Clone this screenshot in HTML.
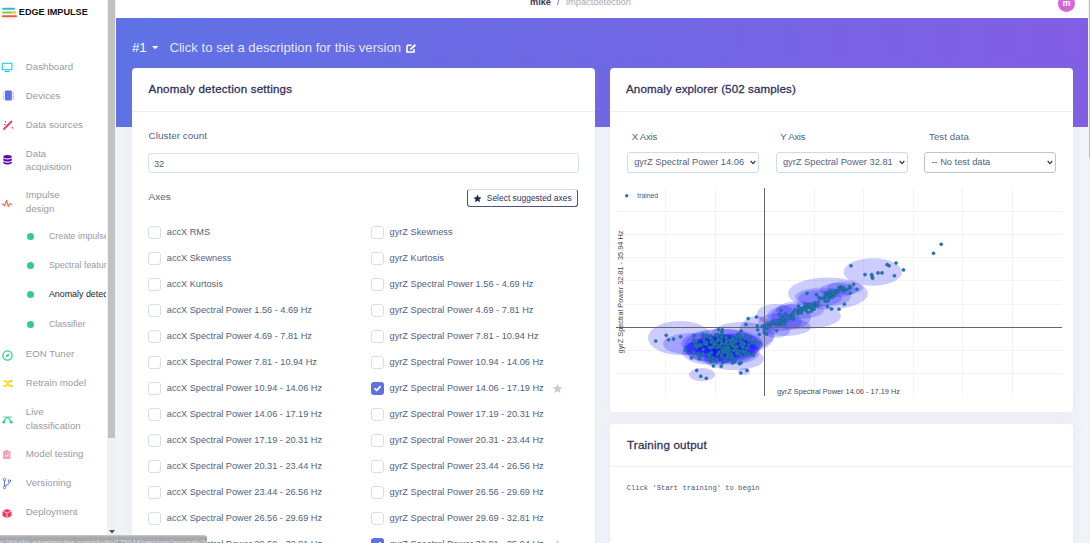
<!DOCTYPE html><html><head><meta charset="utf-8"><style>
html,body{margin:0;padding:0;width:1090px;height:543px;overflow:hidden;background:#fff;}
body{position:relative;font-family:"Liberation Sans",sans-serif;}
.t{position:absolute;white-space:nowrap;line-height:1;}
svg{position:absolute;overflow:visible}
</style></head><body>
<div style="position:absolute;left:116px;top:0px;width:972px;height:18px;background:#fff"></div>
<div style="position:absolute;left:116px;top:18px;width:972px;height:109px;background:linear-gradient(87deg,#5e72e4 0,#825ee4 100%)"></div>
<div style="position:absolute;left:116px;top:127px;width:972px;height:416px;background:#f1f3f9"></div>
<div style="position:absolute;left:1088px;top:0px;width:2px;height:543px;background:#f1f1f1"></div>
<div style="position:absolute;left:1089px;top:0px;width:1px;height:158px;background:#c1c1c1"></div>
<div class="t" style="left:530px;top:-1.79px;font-size:9.2px;color:#3a3a5c;font-weight:700;font-family:'Liberation Sans', sans-serif;letter-spacing:0px;">mike</div>
<div class="t" style="left:557px;top:-1.79px;font-size:9.2px;color:#525f7f;font-weight:400;font-family:'Liberation Sans', sans-serif;letter-spacing:0px;">/</div>
<div class="t" style="left:566px;top:-1.86px;font-size:9.28px;color:#a9aab8;font-weight:400;font-family:'Liberation Sans', sans-serif;letter-spacing:0px;">impactdetection</div>
<div style="position:absolute;left:1058px;top:-5px;width:17px;height:17px;background:#d466db;border-radius:50%"></div>
<div class="t" style="left:1062.5px;top:-0.62px;font-size:9px;color:#fff;font-weight:700;font-family:'Liberation Sans', sans-serif;letter-spacing:0px;">m</div>
<div class="t" style="left:132px;top:40.83px;font-size:13.2px;color:#fff;font-weight:400;font-family:'Liberation Sans', sans-serif;letter-spacing:0px;">#1</div>
<svg style="left:151.5px;top:45.8px" width="7" height="4"><path d="M0 0 H6.4 L3.2 3.2 Z" fill="#fff"/></svg>
<div class="t" style="left:169.4px;top:40.65px;font-size:13.17px;color:rgba(255,255,255,.85);font-weight:400;font-family:'Liberation Sans', sans-serif;letter-spacing:0px;">Click to set a description for this version</div>
<svg style="left:406px;top:43px" width="12" height="10" viewBox="0 0 12 10"><path d="M1 2.2 H5.5 M1 2.2 V9 H8 V6" stroke="#fff" stroke-width="1.6" fill="none"/><path d="M4 7 L4.4 5.2 L8.6 1 L10 2.4 L5.8 6.6 Z" fill="#fff"/></svg>
<div style="position:absolute;left:132px;top:68px;width:463px;height:520px;background:#fff;border-radius:4px;box-shadow:0 0 12px rgba(136,152,170,.10)"></div>
<div style="position:absolute;left:132px;top:111px;width:463px;height:1px;background:#eceef1"></div>
<div style="position:absolute;left:610px;top:68px;width:462.5px;height:343.6px;background:#fff;border-radius:4px;box-shadow:0 0 12px rgba(136,152,170,.10)"></div>
<div style="position:absolute;left:610px;top:111px;width:462.5px;height:1px;background:#eceef1"></div>
<div style="position:absolute;left:610px;top:424px;width:462.5px;height:200px;background:#fff;border-radius:4px;box-shadow:0 0 12px rgba(136,152,170,.10)"></div>
<div style="position:absolute;left:610px;top:466px;width:462.5px;height:1px;background:#eceef1"></div>
<div class="t" style="left:148.5px;top:82.78px;font-size:11.6px;color:#32325d;font-weight:400;font-family:'Liberation Sans', sans-serif;letter-spacing:0.2px;-webkit-text-stroke:0.3px #32325d">Anomaly detection settings</div>
<div class="t" style="left:626px;top:82.78px;font-size:11.6px;color:#32325d;font-weight:400;font-family:'Liberation Sans', sans-serif;letter-spacing:0.1px;-webkit-text-stroke:0.3px #32325d">Anomaly explorer (502 samples)</div>
<div class="t" style="left:627px;top:439.38px;font-size:11.6px;color:#32325d;font-weight:400;font-family:'Liberation Sans', sans-serif;letter-spacing:0.2px;-webkit-text-stroke:0.3px #32325d">Training output</div>
<div class="t" style="left:626.7px;top:484.72px;font-size:7.15px;color:#4a5578;font-weight:400;font-family:'Liberation Mono', monospace;letter-spacing:0px;">Click 'Start training' to begin</div>
<div class="t" style="left:148.6px;top:130.99px;font-size:9.93px;color:#525f7f;font-weight:400;font-family:'Liberation Sans', sans-serif;letter-spacing:0px;">Cluster count</div>
<div style="position:absolute;left:148px;top:153px;width:430.5px;height:19.5px;box-sizing:border-box;border:1px solid #d3e3f3;border-radius:3px;background:#fff"></div>
<div class="t" style="left:154px;top:160.21px;font-size:9.2px;color:#525f7f;font-weight:400;font-family:'Liberation Sans', sans-serif;letter-spacing:0px;">32</div>
<div class="t" style="left:148.6px;top:191.99px;font-size:9.93px;color:#525f7f;font-weight:400;font-family:'Liberation Sans', sans-serif;letter-spacing:0px;">Axes</div>
<div style="position:absolute;left:467px;top:188.5px;width:111px;height:18px;box-sizing:border-box;border:1px solid #4a5676;border-top-color:#d5d9e2;border-radius:3px;background:#fff"></div>
<svg style="left:473px;top:193.5px" width="9" height="9" viewBox="0 0 24 24"><path d="M12 1.5l3.1 7.2 7.8.6-5.9 5.1 1.8 7.6L12 18l-6.8 4 1.8-7.6L1.1 9.3l7.8-.6z" fill="#172b4d"/></svg>
<div class="t" style="left:486.8px;top:193.75px;font-size:8.45px;color:#32325d;font-weight:400;font-family:'Liberation Sans', sans-serif;letter-spacing:0px;">Select suggested axes</div>
<div style="position:absolute;left:148.2px;top:226.2px;width:13px;height:12.5px;box-sizing:border-box;border:1px solid #d9dde5;border-radius:3px;background:#fff"></div>
<div class="t" style="left:166.8px;top:227.75px;font-size:9.16px;color:#525f7f;font-weight:400;font-family:'Liberation Sans', sans-serif;letter-spacing:0px;">accX RMS</div>
<div style="position:absolute;left:371.2px;top:226.2px;width:13px;height:12.5px;box-sizing:border-box;border:1px solid #d9dde5;border-radius:3px;background:#fff"></div>
<div class="t" style="left:389.5px;top:227.70px;font-size:9.22px;color:#525f7f;font-weight:400;font-family:'Liberation Sans', sans-serif;letter-spacing:0px;">gyrZ Skewness</div>
<div style="position:absolute;left:148.2px;top:252.2px;width:13px;height:12.5px;box-sizing:border-box;border:1px solid #d9dde5;border-radius:3px;background:#fff"></div>
<div class="t" style="left:166.8px;top:253.75px;font-size:9.16px;color:#525f7f;font-weight:400;font-family:'Liberation Sans', sans-serif;letter-spacing:0px;">accX Skewness</div>
<div style="position:absolute;left:371.2px;top:252.2px;width:13px;height:12.5px;box-sizing:border-box;border:1px solid #d9dde5;border-radius:3px;background:#fff"></div>
<div class="t" style="left:389.5px;top:253.70px;font-size:9.22px;color:#525f7f;font-weight:400;font-family:'Liberation Sans', sans-serif;letter-spacing:0px;">gyrZ Kurtosis</div>
<div style="position:absolute;left:148.2px;top:278.2px;width:13px;height:12.5px;box-sizing:border-box;border:1px solid #d9dde5;border-radius:3px;background:#fff"></div>
<div class="t" style="left:166.8px;top:279.75px;font-size:9.16px;color:#525f7f;font-weight:400;font-family:'Liberation Sans', sans-serif;letter-spacing:0px;">accX Kurtosis</div>
<div style="position:absolute;left:371.2px;top:278.2px;width:13px;height:12.5px;box-sizing:border-box;border:1px solid #d9dde5;border-radius:3px;background:#fff"></div>
<div class="t" style="left:389.5px;top:279.70px;font-size:9.22px;color:#525f7f;font-weight:400;font-family:'Liberation Sans', sans-serif;letter-spacing:0px;">gyrZ Spectral Power 1.56 - 4.69 Hz</div>
<div style="position:absolute;left:148.2px;top:304.2px;width:13px;height:12.5px;box-sizing:border-box;border:1px solid #d9dde5;border-radius:3px;background:#fff"></div>
<div class="t" style="left:166.8px;top:305.75px;font-size:9.16px;color:#525f7f;font-weight:400;font-family:'Liberation Sans', sans-serif;letter-spacing:0px;">accX Spectral Power 1.56 - 4.69 Hz</div>
<div style="position:absolute;left:371.2px;top:304.2px;width:13px;height:12.5px;box-sizing:border-box;border:1px solid #d9dde5;border-radius:3px;background:#fff"></div>
<div class="t" style="left:389.5px;top:305.70px;font-size:9.22px;color:#525f7f;font-weight:400;font-family:'Liberation Sans', sans-serif;letter-spacing:0px;">gyrZ Spectral Power 4.69 - 7.81 Hz</div>
<div style="position:absolute;left:148.2px;top:330.2px;width:13px;height:12.5px;box-sizing:border-box;border:1px solid #d9dde5;border-radius:3px;background:#fff"></div>
<div class="t" style="left:166.8px;top:331.75px;font-size:9.16px;color:#525f7f;font-weight:400;font-family:'Liberation Sans', sans-serif;letter-spacing:0px;">accX Spectral Power 4.69 - 7.81 Hz</div>
<div style="position:absolute;left:371.2px;top:330.2px;width:13px;height:12.5px;box-sizing:border-box;border:1px solid #d9dde5;border-radius:3px;background:#fff"></div>
<div class="t" style="left:389.5px;top:331.70px;font-size:9.22px;color:#525f7f;font-weight:400;font-family:'Liberation Sans', sans-serif;letter-spacing:0px;">gyrZ Spectral Power 7.81 - 10.94 Hz</div>
<div style="position:absolute;left:148.2px;top:356.2px;width:13px;height:12.5px;box-sizing:border-box;border:1px solid #d9dde5;border-radius:3px;background:#fff"></div>
<div class="t" style="left:166.8px;top:357.75px;font-size:9.16px;color:#525f7f;font-weight:400;font-family:'Liberation Sans', sans-serif;letter-spacing:0px;">accX Spectral Power 7.81 - 10.94 Hz</div>
<div style="position:absolute;left:371.2px;top:356.2px;width:13px;height:12.5px;box-sizing:border-box;border:1px solid #d9dde5;border-radius:3px;background:#fff"></div>
<div class="t" style="left:389.5px;top:357.70px;font-size:9.22px;color:#525f7f;font-weight:400;font-family:'Liberation Sans', sans-serif;letter-spacing:0px;">gyrZ Spectral Power 10.94 - 14.06 Hz</div>
<div style="position:absolute;left:148.2px;top:382.2px;width:13px;height:12.5px;box-sizing:border-box;border:1px solid #d9dde5;border-radius:3px;background:#fff"></div>
<div class="t" style="left:166.8px;top:383.75px;font-size:9.16px;color:#525f7f;font-weight:400;font-family:'Liberation Sans', sans-serif;letter-spacing:0px;">accX Spectral Power 10.94 - 14.06 Hz</div>
<div style="position:absolute;left:371.2px;top:382.2px;width:13px;height:12.5px;background:#5e72e4;border-radius:3px"></div>
<svg style="left:371.2px;top:382.2px" width="13" height="13" viewBox="0 0 13 13"><path d="M3.9 6.7 L5.7 8.3 L9.1 4.7" stroke="#fff" stroke-width="1.7" fill="none" stroke-linecap="round" stroke-linejoin="round"/></svg>
<div class="t" style="left:389.5px;top:383.70px;font-size:9.22px;color:#525f7f;font-weight:400;font-family:'Liberation Sans', sans-serif;letter-spacing:0px;">gyrZ Spectral Power 14.06 - 17.19 Hz</div>
<svg style="left:551.5px;top:382.8px" width="11" height="11" viewBox="0 0 24 24"><path d="M12 1.5l3.1 7.2 7.8.6-5.9 5.1 1.8 7.6L12 18l-6.8 4 1.8-7.6L1.1 9.3l7.8-.6z" fill="#c9ccd6"/></svg>
<div style="position:absolute;left:148.2px;top:408.2px;width:13px;height:12.5px;box-sizing:border-box;border:1px solid #d9dde5;border-radius:3px;background:#fff"></div>
<div class="t" style="left:166.8px;top:409.75px;font-size:9.16px;color:#525f7f;font-weight:400;font-family:'Liberation Sans', sans-serif;letter-spacing:0px;">accX Spectral Power 14.06 - 17.19 Hz</div>
<div style="position:absolute;left:371.2px;top:408.2px;width:13px;height:12.5px;box-sizing:border-box;border:1px solid #d9dde5;border-radius:3px;background:#fff"></div>
<div class="t" style="left:389.5px;top:409.70px;font-size:9.22px;color:#525f7f;font-weight:400;font-family:'Liberation Sans', sans-serif;letter-spacing:0px;">gyrZ Spectral Power 17.19 - 20.31 Hz</div>
<div style="position:absolute;left:148.2px;top:434.2px;width:13px;height:12.5px;box-sizing:border-box;border:1px solid #d9dde5;border-radius:3px;background:#fff"></div>
<div class="t" style="left:166.8px;top:435.75px;font-size:9.16px;color:#525f7f;font-weight:400;font-family:'Liberation Sans', sans-serif;letter-spacing:0px;">accX Spectral Power 17.19 - 20.31 Hz</div>
<div style="position:absolute;left:371.2px;top:434.2px;width:13px;height:12.5px;box-sizing:border-box;border:1px solid #d9dde5;border-radius:3px;background:#fff"></div>
<div class="t" style="left:389.5px;top:435.70px;font-size:9.22px;color:#525f7f;font-weight:400;font-family:'Liberation Sans', sans-serif;letter-spacing:0px;">gyrZ Spectral Power 20.31 - 23.44 Hz</div>
<div style="position:absolute;left:148.2px;top:460.2px;width:13px;height:12.5px;box-sizing:border-box;border:1px solid #d9dde5;border-radius:3px;background:#fff"></div>
<div class="t" style="left:166.8px;top:461.75px;font-size:9.16px;color:#525f7f;font-weight:400;font-family:'Liberation Sans', sans-serif;letter-spacing:0px;">accX Spectral Power 20.31 - 23.44 Hz</div>
<div style="position:absolute;left:371.2px;top:460.2px;width:13px;height:12.5px;box-sizing:border-box;border:1px solid #d9dde5;border-radius:3px;background:#fff"></div>
<div class="t" style="left:389.5px;top:461.70px;font-size:9.22px;color:#525f7f;font-weight:400;font-family:'Liberation Sans', sans-serif;letter-spacing:0px;">gyrZ Spectral Power 23.44 - 26.56 Hz</div>
<div style="position:absolute;left:148.2px;top:486.2px;width:13px;height:12.5px;box-sizing:border-box;border:1px solid #d9dde5;border-radius:3px;background:#fff"></div>
<div class="t" style="left:166.8px;top:487.75px;font-size:9.16px;color:#525f7f;font-weight:400;font-family:'Liberation Sans', sans-serif;letter-spacing:0px;">accX Spectral Power 23.44 - 26.56 Hz</div>
<div style="position:absolute;left:371.2px;top:486.2px;width:13px;height:12.5px;box-sizing:border-box;border:1px solid #d9dde5;border-radius:3px;background:#fff"></div>
<div class="t" style="left:389.5px;top:487.70px;font-size:9.22px;color:#525f7f;font-weight:400;font-family:'Liberation Sans', sans-serif;letter-spacing:0px;">gyrZ Spectral Power 26.56 - 29.69 Hz</div>
<div style="position:absolute;left:148.2px;top:512.2px;width:13px;height:12.5px;box-sizing:border-box;border:1px solid #d9dde5;border-radius:3px;background:#fff"></div>
<div class="t" style="left:166.8px;top:513.75px;font-size:9.16px;color:#525f7f;font-weight:400;font-family:'Liberation Sans', sans-serif;letter-spacing:0px;">accX Spectral Power 26.56 - 29.69 Hz</div>
<div style="position:absolute;left:371.2px;top:512.2px;width:13px;height:12.5px;box-sizing:border-box;border:1px solid #d9dde5;border-radius:3px;background:#fff"></div>
<div class="t" style="left:389.5px;top:513.70px;font-size:9.22px;color:#525f7f;font-weight:400;font-family:'Liberation Sans', sans-serif;letter-spacing:0px;">gyrZ Spectral Power 29.69 - 32.81 Hz</div>
<div style="position:absolute;left:148.2px;top:538.2px;width:13px;height:12.5px;box-sizing:border-box;border:1px solid #d9dde5;border-radius:3px;background:#fff"></div>
<div class="t" style="left:166.8px;top:539.75px;font-size:9.16px;color:#525f7f;font-weight:400;font-family:'Liberation Sans', sans-serif;letter-spacing:0px;">accX Spectral Power 29.69 - 32.81 Hz</div>
<div style="position:absolute;left:371.2px;top:538.2px;width:13px;height:12.5px;background:#5e72e4;border-radius:3px"></div>
<svg style="left:371.2px;top:538.2px" width="13" height="13" viewBox="0 0 13 13"><path d="M3.9 6.7 L5.7 8.3 L9.1 4.7" stroke="#fff" stroke-width="1.7" fill="none" stroke-linecap="round" stroke-linejoin="round"/></svg>
<div class="t" style="left:389.5px;top:539.70px;font-size:9.22px;color:#525f7f;font-weight:400;font-family:'Liberation Sans', sans-serif;letter-spacing:0px;">gyrZ Spectral Power 32.81 - 35.94 Hz</div>
<svg style="left:551.5px;top:538.8000000000001px" width="11" height="11" viewBox="0 0 24 24"><path d="M12 1.5l3.1 7.2 7.8.6-5.9 5.1 1.8 7.6L12 18l-6.8 4 1.8-7.6L1.1 9.3l7.8-.6z" fill="#c9ccd6"/></svg>
<div class="t" style="left:631.8px;top:131.67px;font-size:9.6px;color:#525f7f;font-weight:400;font-family:'Liberation Sans', sans-serif;letter-spacing:-0.25px;">X Axis</div>
<div class="t" style="left:780.3px;top:131.67px;font-size:9.6px;color:#525f7f;font-weight:400;font-family:'Liberation Sans', sans-serif;letter-spacing:-0.25px;">Y Axis</div>
<div class="t" style="left:929px;top:131.67px;font-size:9.6px;color:#525f7f;font-weight:400;font-family:'Liberation Sans', sans-serif;letter-spacing:0.1px;">Test data</div>
<div style="position:absolute;left:626.8px;top:152.3px;width:132.2px;height:20.3px;box-sizing:border-box;border:1px solid #c9dcf0;border-radius:3px;background:#fff"></div>
<div class="t" style="left:634.1999999999999px;top:158.14px;font-size:9.29px;color:#525f7f;font-weight:400;font-family:'Liberation Sans', sans-serif;letter-spacing:0px;">gyrZ Spectral Power 14.06</div>
<svg style="left:750.0px;top:160px" width="6" height="5" viewBox="0 0 6 5"><path d="M0.7 1 L3 3.6 L5.3 1" stroke="#32325d" stroke-width="1.2" fill="none"/></svg>
<div style="position:absolute;left:775.5px;top:152.3px;width:132.2px;height:20.3px;box-sizing:border-box;border:1px solid #c9dcf0;border-radius:3px;background:#fff"></div>
<div class="t" style="left:782.9px;top:158.14px;font-size:9.29px;color:#525f7f;font-weight:400;font-family:'Liberation Sans', sans-serif;letter-spacing:0px;">gyrZ Spectral Power 32.81</div>
<svg style="left:898.7px;top:160px" width="6" height="5" viewBox="0 0 6 5"><path d="M0.7 1 L3 3.6 L5.3 1" stroke="#32325d" stroke-width="1.2" fill="none"/></svg>
<div style="position:absolute;left:924px;top:152.3px;width:132.2px;height:20.3px;box-sizing:border-box;border:1px solid #bcc5d2;border-radius:3px;background:#fff"></div>
<div class="t" style="left:931.4px;top:158.14px;font-size:9.29px;color:#525f7f;font-weight:400;font-family:'Liberation Sans', sans-serif;letter-spacing:0px;">-- No test data</div>
<svg style="left:1047.2px;top:160px" width="6" height="5" viewBox="0 0 6 5"><path d="M0.7 1 L3 3.6 L5.3 1" stroke="#32325d" stroke-width="1.2" fill="none"/></svg>
<svg style="left:0;top:0" width="1090" height="543">
<line x1="665.5" y1="188" x2="665.5" y2="397" stroke="#f3f3f3" stroke-width="1"/>
<line x1="715.5" y1="188" x2="715.5" y2="397" stroke="#f3f3f3" stroke-width="1"/>
<line x1="814.5" y1="188" x2="814.5" y2="397" stroke="#f3f3f3" stroke-width="1"/>
<line x1="863.5" y1="188" x2="863.5" y2="397" stroke="#f3f3f3" stroke-width="1"/>
<line x1="913.5" y1="188" x2="913.5" y2="397" stroke="#f3f3f3" stroke-width="1"/>
<line x1="962.5" y1="188" x2="962.5" y2="397" stroke="#f3f3f3" stroke-width="1"/>
<line x1="1012.5" y1="188" x2="1012.5" y2="397" stroke="#f3f3f3" stroke-width="1"/>
<line x1="616" y1="211.5" x2="1062" y2="211.5" stroke="#f3f3f3" stroke-width="1"/>
<line x1="616" y1="234.5" x2="1062" y2="234.5" stroke="#f3f3f3" stroke-width="1"/>
<line x1="616" y1="257.5" x2="1062" y2="257.5" stroke="#f3f3f3" stroke-width="1"/>
<line x1="616" y1="280.5" x2="1062" y2="280.5" stroke="#f3f3f3" stroke-width="1"/>
<line x1="616" y1="304.5" x2="1062" y2="304.5" stroke="#f3f3f3" stroke-width="1"/>
<line x1="616" y1="350.5" x2="1062" y2="350.5" stroke="#f3f3f3" stroke-width="1"/>
<line x1="616" y1="373.5" x2="1062" y2="373.5" stroke="#f3f3f3" stroke-width="1"/>
<ellipse cx="680" cy="338" rx="32" ry="17" fill="rgba(0,0,255,0.2)"/>
<ellipse cx="692" cy="344" rx="29" ry="11" fill="rgba(0,0,255,0.2)"/>
<ellipse cx="722" cy="343.5" rx="41" ry="14.5" fill="rgba(0,0,255,0.2)"/>
<ellipse cx="734" cy="359" rx="30" ry="11" fill="rgba(0,0,255,0.2)"/>
<ellipse cx="742" cy="336" rx="32" ry="14" fill="rgba(0,0,255,0.2)"/>
<ellipse cx="702" cy="374.6" rx="13" ry="6.6" fill="rgba(0,0,255,0.2)"/>
<ellipse cx="744" cy="371.5" rx="6" ry="3.5" fill="rgba(0,0,255,0.2)"/>
<ellipse cx="722" cy="346" rx="38" ry="17" fill="rgba(0,0,255,0.2)"/>
<ellipse cx="725" cy="348" rx="30" ry="13" fill="rgba(0,0,255,0.2)"/>
<ellipse cx="720" cy="345" rx="25" ry="11" fill="rgba(0,0,255,0.2)"/>
<ellipse cx="728" cy="343" rx="20" ry="9" fill="rgba(0,0,255,0.2)"/>
<ellipse cx="712" cy="350" rx="28" ry="12" fill="rgba(0,0,255,0.2)"/>
<ellipse cx="735" cy="352" rx="25" ry="12" fill="rgba(0,0,255,0.2)"/>
<ellipse cx="718" cy="347" rx="18" ry="8" fill="rgba(0,0,255,0.2)"/>
<ellipse cx="872.8" cy="272" rx="29.2" ry="13.7" fill="rgba(0,0,255,0.2)"/>
<ellipse cx="828" cy="293.5" rx="40" ry="16" fill="rgba(0,0,255,0.2)"/>
<ellipse cx="845" cy="288" rx="18" ry="6.7" fill="rgba(0,0,255,0.2)"/>
<ellipse cx="823" cy="297" rx="28" ry="9.5" fill="rgba(0,0,255,0.2)"/>
<ellipse cx="804" cy="316" rx="37" ry="13" fill="rgba(0,0,255,0.2)"/>
<ellipse cx="775.6" cy="314.3" rx="19" ry="10.3" fill="rgba(0,0,255,0.2)"/>
<ellipse cx="791" cy="317" rx="20" ry="12.5" fill="rgba(0,0,255,0.2)"/>
<ellipse cx="786" cy="327" rx="25" ry="9" fill="rgba(0,0,255,0.2)"/>
<ellipse cx="757" cy="333" rx="18" ry="17" fill="rgba(0,0,255,0.2)"/>
<ellipse cx="776" cy="331" rx="14" ry="6.7" fill="rgba(0,0,255,0.2)"/>
<ellipse cx="780" cy="322" rx="22" ry="9" fill="rgba(0,0,255,0.2)"/>
<ellipse cx="800" cy="310" rx="24" ry="9" fill="rgba(0,0,255,0.2)"/>
<ellipse cx="820" cy="298" rx="22" ry="8" fill="rgba(0,0,255,0.2)"/>
<ellipse cx="838" cy="290" rx="18" ry="7" fill="rgba(0,0,255,0.2)"/>
<ellipse cx="722" cy="350" rx="36" ry="15" fill="rgba(0,0,255,0.2)"/>
<ellipse cx="712" cy="352" rx="30" ry="13" fill="rgba(0,0,255,0.2)"/>
<ellipse cx="735" cy="345" rx="28" ry="12" fill="rgba(0,0,255,0.2)"/>
<line x1="764.5" y1="188" x2="764.5" y2="396" stroke="#666" stroke-width="1"/>
<line x1="616" y1="327.5" x2="1062" y2="327.5" stroke="#666" stroke-width="1"/>
<circle cx="703.2" cy="349.4" r="1.55" fill="#1f77b4" stroke="#1b5f88" stroke-width="0.45"/>
<circle cx="740.9" cy="341.4" r="1.55" fill="#1f77b4" stroke="#1b5f88" stroke-width="0.45"/>
<circle cx="701.4" cy="345.4" r="1.55" fill="#1f77b4" stroke="#1b5f88" stroke-width="0.45"/>
<circle cx="732.1" cy="355.9" r="1.55" fill="#1f77b4" stroke="#1b5f88" stroke-width="0.45"/>
<circle cx="703.3" cy="334.4" r="1.55" fill="#1f77b4" stroke="#1b5f88" stroke-width="0.45"/>
<circle cx="736.0" cy="350.3" r="1.55" fill="#1f77b4" stroke="#1b5f88" stroke-width="0.45"/>
<circle cx="750.1" cy="354.8" r="1.55" fill="#1f77b4" stroke="#1b5f88" stroke-width="0.45"/>
<circle cx="722.3" cy="343.5" r="1.55" fill="#1f77b4" stroke="#1b5f88" stroke-width="0.45"/>
<circle cx="710.7" cy="335.8" r="1.55" fill="#1f77b4" stroke="#1b5f88" stroke-width="0.45"/>
<circle cx="725.6" cy="347.3" r="1.55" fill="#1f77b4" stroke="#1b5f88" stroke-width="0.45"/>
<circle cx="718.1" cy="345.4" r="1.55" fill="#1f77b4" stroke="#1b5f88" stroke-width="0.45"/>
<circle cx="728.6" cy="352.2" r="1.55" fill="#1f77b4" stroke="#1b5f88" stroke-width="0.45"/>
<circle cx="742.6" cy="347.9" r="1.55" fill="#1f77b4" stroke="#1b5f88" stroke-width="0.45"/>
<circle cx="693.6" cy="352.3" r="1.55" fill="#1f77b4" stroke="#1b5f88" stroke-width="0.45"/>
<circle cx="699.9" cy="344.5" r="1.55" fill="#1f77b4" stroke="#1b5f88" stroke-width="0.45"/>
<circle cx="698.9" cy="346.0" r="1.55" fill="#1f77b4" stroke="#1b5f88" stroke-width="0.45"/>
<circle cx="710.8" cy="347.9" r="1.55" fill="#1f77b4" stroke="#1b5f88" stroke-width="0.45"/>
<circle cx="738.3" cy="334.1" r="1.55" fill="#1f77b4" stroke="#1b5f88" stroke-width="0.45"/>
<circle cx="719.1" cy="352.0" r="1.55" fill="#1f77b4" stroke="#1b5f88" stroke-width="0.45"/>
<circle cx="722.4" cy="349.3" r="1.55" fill="#1f77b4" stroke="#1b5f88" stroke-width="0.45"/>
<circle cx="725.8" cy="336.9" r="1.55" fill="#1f77b4" stroke="#1b5f88" stroke-width="0.45"/>
<circle cx="733.6" cy="338.7" r="1.55" fill="#1f77b4" stroke="#1b5f88" stroke-width="0.45"/>
<circle cx="755.8" cy="341.5" r="1.55" fill="#1f77b4" stroke="#1b5f88" stroke-width="0.45"/>
<circle cx="735.7" cy="346.0" r="1.55" fill="#1f77b4" stroke="#1b5f88" stroke-width="0.45"/>
<circle cx="740.2" cy="340.6" r="1.55" fill="#1f77b4" stroke="#1b5f88" stroke-width="0.45"/>
<circle cx="741.0" cy="344.9" r="1.55" fill="#1f77b4" stroke="#1b5f88" stroke-width="0.45"/>
<circle cx="745.5" cy="351.6" r="1.55" fill="#1f77b4" stroke="#1b5f88" stroke-width="0.45"/>
<circle cx="726.4" cy="339.0" r="1.55" fill="#1f77b4" stroke="#1b5f88" stroke-width="0.45"/>
<circle cx="737.1" cy="350.2" r="1.55" fill="#1f77b4" stroke="#1b5f88" stroke-width="0.45"/>
<circle cx="751.9" cy="342.6" r="1.55" fill="#1f77b4" stroke="#1b5f88" stroke-width="0.45"/>
<circle cx="733.4" cy="350.6" r="1.55" fill="#1f77b4" stroke="#1b5f88" stroke-width="0.45"/>
<circle cx="728.8" cy="347.9" r="1.55" fill="#1f77b4" stroke="#1b5f88" stroke-width="0.45"/>
<circle cx="727.1" cy="340.6" r="1.55" fill="#1f77b4" stroke="#1b5f88" stroke-width="0.45"/>
<circle cx="706.8" cy="342.4" r="1.55" fill="#1f77b4" stroke="#1b5f88" stroke-width="0.45"/>
<circle cx="734.0" cy="359.6" r="1.55" fill="#1f77b4" stroke="#1b5f88" stroke-width="0.45"/>
<circle cx="740.6" cy="355.5" r="1.55" fill="#1f77b4" stroke="#1b5f88" stroke-width="0.45"/>
<circle cx="737.2" cy="352.3" r="1.55" fill="#1f77b4" stroke="#1b5f88" stroke-width="0.45"/>
<circle cx="727.1" cy="352.9" r="1.55" fill="#1f77b4" stroke="#1b5f88" stroke-width="0.45"/>
<circle cx="754.2" cy="343.1" r="1.55" fill="#1f77b4" stroke="#1b5f88" stroke-width="0.45"/>
<circle cx="728.2" cy="354.7" r="1.55" fill="#1f77b4" stroke="#1b5f88" stroke-width="0.45"/>
<circle cx="738.9" cy="335.8" r="1.55" fill="#1f77b4" stroke="#1b5f88" stroke-width="0.45"/>
<circle cx="727.0" cy="352.8" r="1.55" fill="#1f77b4" stroke="#1b5f88" stroke-width="0.45"/>
<circle cx="726.2" cy="338.0" r="1.55" fill="#1f77b4" stroke="#1b5f88" stroke-width="0.45"/>
<circle cx="722.1" cy="349.4" r="1.55" fill="#1f77b4" stroke="#1b5f88" stroke-width="0.45"/>
<circle cx="743.0" cy="352.4" r="1.55" fill="#1f77b4" stroke="#1b5f88" stroke-width="0.45"/>
<circle cx="725.0" cy="358.2" r="1.55" fill="#1f77b4" stroke="#1b5f88" stroke-width="0.45"/>
<circle cx="711.1" cy="353.1" r="1.55" fill="#1f77b4" stroke="#1b5f88" stroke-width="0.45"/>
<circle cx="742.9" cy="343.4" r="1.55" fill="#1f77b4" stroke="#1b5f88" stroke-width="0.45"/>
<circle cx="728.0" cy="350.8" r="1.55" fill="#1f77b4" stroke="#1b5f88" stroke-width="0.45"/>
<circle cx="750.3" cy="337.0" r="1.55" fill="#1f77b4" stroke="#1b5f88" stroke-width="0.45"/>
<circle cx="724.0" cy="351.8" r="1.55" fill="#1f77b4" stroke="#1b5f88" stroke-width="0.45"/>
<circle cx="741.1" cy="337.7" r="1.55" fill="#1f77b4" stroke="#1b5f88" stroke-width="0.45"/>
<circle cx="717.0" cy="348.0" r="1.55" fill="#1f77b4" stroke="#1b5f88" stroke-width="0.45"/>
<circle cx="725.9" cy="360.0" r="1.55" fill="#1f77b4" stroke="#1b5f88" stroke-width="0.45"/>
<circle cx="722.6" cy="362.8" r="1.55" fill="#1f77b4" stroke="#1b5f88" stroke-width="0.45"/>
<circle cx="712.4" cy="341.7" r="1.55" fill="#1f77b4" stroke="#1b5f88" stroke-width="0.45"/>
<circle cx="736.3" cy="358.8" r="1.55" fill="#1f77b4" stroke="#1b5f88" stroke-width="0.45"/>
<circle cx="735.1" cy="348.7" r="1.55" fill="#1f77b4" stroke="#1b5f88" stroke-width="0.45"/>
<circle cx="713.6" cy="341.2" r="1.55" fill="#1f77b4" stroke="#1b5f88" stroke-width="0.45"/>
<circle cx="734.0" cy="343.0" r="1.55" fill="#1f77b4" stroke="#1b5f88" stroke-width="0.45"/>
<circle cx="737.4" cy="346.7" r="1.55" fill="#1f77b4" stroke="#1b5f88" stroke-width="0.45"/>
<circle cx="718.3" cy="347.1" r="1.55" fill="#1f77b4" stroke="#1b5f88" stroke-width="0.45"/>
<circle cx="731.3" cy="353.7" r="1.55" fill="#1f77b4" stroke="#1b5f88" stroke-width="0.45"/>
<circle cx="715.9" cy="343.9" r="1.55" fill="#1f77b4" stroke="#1b5f88" stroke-width="0.45"/>
<circle cx="748.7" cy="344.4" r="1.55" fill="#1f77b4" stroke="#1b5f88" stroke-width="0.45"/>
<circle cx="715.9" cy="334.9" r="1.55" fill="#1f77b4" stroke="#1b5f88" stroke-width="0.45"/>
<circle cx="726.9" cy="347.9" r="1.55" fill="#1f77b4" stroke="#1b5f88" stroke-width="0.45"/>
<circle cx="748.0" cy="347.7" r="1.55" fill="#1f77b4" stroke="#1b5f88" stroke-width="0.45"/>
<circle cx="696.6" cy="347.6" r="1.55" fill="#1f77b4" stroke="#1b5f88" stroke-width="0.45"/>
<circle cx="743.0" cy="351.2" r="1.55" fill="#1f77b4" stroke="#1b5f88" stroke-width="0.45"/>
<circle cx="721.9" cy="332.0" r="1.55" fill="#1f77b4" stroke="#1b5f88" stroke-width="0.45"/>
<circle cx="708.6" cy="357.0" r="1.55" fill="#1f77b4" stroke="#1b5f88" stroke-width="0.45"/>
<circle cx="697.9" cy="353.9" r="1.55" fill="#1f77b4" stroke="#1b5f88" stroke-width="0.45"/>
<circle cx="738.5" cy="337.1" r="1.55" fill="#1f77b4" stroke="#1b5f88" stroke-width="0.45"/>
<circle cx="712.2" cy="339.8" r="1.55" fill="#1f77b4" stroke="#1b5f88" stroke-width="0.45"/>
<circle cx="703.8" cy="339.9" r="1.55" fill="#1f77b4" stroke="#1b5f88" stroke-width="0.45"/>
<circle cx="745.3" cy="352.2" r="1.55" fill="#1f77b4" stroke="#1b5f88" stroke-width="0.45"/>
<circle cx="721.7" cy="337.2" r="1.55" fill="#1f77b4" stroke="#1b5f88" stroke-width="0.45"/>
<circle cx="721.9" cy="334.2" r="1.55" fill="#1f77b4" stroke="#1b5f88" stroke-width="0.45"/>
<circle cx="693.8" cy="352.3" r="1.55" fill="#1f77b4" stroke="#1b5f88" stroke-width="0.45"/>
<circle cx="748.5" cy="353.5" r="1.55" fill="#1f77b4" stroke="#1b5f88" stroke-width="0.45"/>
<circle cx="746.7" cy="348.3" r="1.55" fill="#1f77b4" stroke="#1b5f88" stroke-width="0.45"/>
<circle cx="711.8" cy="346.8" r="1.55" fill="#1f77b4" stroke="#1b5f88" stroke-width="0.45"/>
<circle cx="717.6" cy="336.0" r="1.55" fill="#1f77b4" stroke="#1b5f88" stroke-width="0.45"/>
<circle cx="723.9" cy="347.4" r="1.55" fill="#1f77b4" stroke="#1b5f88" stroke-width="0.45"/>
<circle cx="715.9" cy="358.9" r="1.55" fill="#1f77b4" stroke="#1b5f88" stroke-width="0.45"/>
<circle cx="727.0" cy="351.2" r="1.55" fill="#1f77b4" stroke="#1b5f88" stroke-width="0.45"/>
<circle cx="744.7" cy="338.6" r="1.55" fill="#1f77b4" stroke="#1b5f88" stroke-width="0.45"/>
<circle cx="712.3" cy="357.8" r="1.55" fill="#1f77b4" stroke="#1b5f88" stroke-width="0.45"/>
<circle cx="729.7" cy="355.1" r="1.55" fill="#1f77b4" stroke="#1b5f88" stroke-width="0.45"/>
<circle cx="736.2" cy="339.9" r="1.55" fill="#1f77b4" stroke="#1b5f88" stroke-width="0.45"/>
<circle cx="711.1" cy="342.1" r="1.55" fill="#1f77b4" stroke="#1b5f88" stroke-width="0.45"/>
<circle cx="737.1" cy="354.0" r="1.55" fill="#1f77b4" stroke="#1b5f88" stroke-width="0.45"/>
<circle cx="741.2" cy="331.1" r="1.55" fill="#1f77b4" stroke="#1b5f88" stroke-width="0.45"/>
<circle cx="722.3" cy="351.4" r="1.55" fill="#1f77b4" stroke="#1b5f88" stroke-width="0.45"/>
<circle cx="711.0" cy="348.2" r="1.55" fill="#1f77b4" stroke="#1b5f88" stroke-width="0.45"/>
<circle cx="727.9" cy="355.1" r="1.55" fill="#1f77b4" stroke="#1b5f88" stroke-width="0.45"/>
<circle cx="710.0" cy="338.5" r="1.55" fill="#1f77b4" stroke="#1b5f88" stroke-width="0.45"/>
<circle cx="711.0" cy="361.8" r="1.55" fill="#1f77b4" stroke="#1b5f88" stroke-width="0.45"/>
<circle cx="742.5" cy="344.9" r="1.55" fill="#1f77b4" stroke="#1b5f88" stroke-width="0.45"/>
<circle cx="727.8" cy="347.0" r="1.55" fill="#1f77b4" stroke="#1b5f88" stroke-width="0.45"/>
<circle cx="727.5" cy="344.1" r="1.55" fill="#1f77b4" stroke="#1b5f88" stroke-width="0.45"/>
<circle cx="718.3" cy="334.7" r="1.55" fill="#1f77b4" stroke="#1b5f88" stroke-width="0.45"/>
<circle cx="713.1" cy="360.9" r="1.55" fill="#1f77b4" stroke="#1b5f88" stroke-width="0.45"/>
<circle cx="733.1" cy="346.6" r="1.55" fill="#1f77b4" stroke="#1b5f88" stroke-width="0.45"/>
<circle cx="720.3" cy="346.6" r="1.55" fill="#1f77b4" stroke="#1b5f88" stroke-width="0.45"/>
<circle cx="730.0" cy="340.2" r="1.55" fill="#1f77b4" stroke="#1b5f88" stroke-width="0.45"/>
<circle cx="727.3" cy="348.2" r="1.55" fill="#1f77b4" stroke="#1b5f88" stroke-width="0.45"/>
<circle cx="711.3" cy="338.9" r="1.55" fill="#1f77b4" stroke="#1b5f88" stroke-width="0.45"/>
<circle cx="707.0" cy="336.4" r="1.55" fill="#1f77b4" stroke="#1b5f88" stroke-width="0.45"/>
<circle cx="719.5" cy="340.5" r="1.55" fill="#1f77b4" stroke="#1b5f88" stroke-width="0.45"/>
<circle cx="713.5" cy="346.9" r="1.55" fill="#1f77b4" stroke="#1b5f88" stroke-width="0.45"/>
<circle cx="743.2" cy="346.7" r="1.55" fill="#1f77b4" stroke="#1b5f88" stroke-width="0.45"/>
<circle cx="721.6" cy="340.5" r="1.55" fill="#1f77b4" stroke="#1b5f88" stroke-width="0.45"/>
<circle cx="721.8" cy="354.2" r="1.55" fill="#1f77b4" stroke="#1b5f88" stroke-width="0.45"/>
<circle cx="717.3" cy="335.7" r="1.55" fill="#1f77b4" stroke="#1b5f88" stroke-width="0.45"/>
<circle cx="702.5" cy="336.0" r="1.55" fill="#1f77b4" stroke="#1b5f88" stroke-width="0.45"/>
<circle cx="700.4" cy="355.9" r="1.55" fill="#1f77b4" stroke="#1b5f88" stroke-width="0.45"/>
<circle cx="730.0" cy="343.9" r="1.55" fill="#1f77b4" stroke="#1b5f88" stroke-width="0.45"/>
<circle cx="748.8" cy="340.1" r="1.55" fill="#1f77b4" stroke="#1b5f88" stroke-width="0.45"/>
<circle cx="736.8" cy="353.2" r="1.55" fill="#1f77b4" stroke="#1b5f88" stroke-width="0.45"/>
<circle cx="708.2" cy="354.2" r="1.55" fill="#1f77b4" stroke="#1b5f88" stroke-width="0.45"/>
<circle cx="746.0" cy="335.0" r="1.55" fill="#1f77b4" stroke="#1b5f88" stroke-width="0.45"/>
<circle cx="741.8" cy="342.6" r="1.55" fill="#1f77b4" stroke="#1b5f88" stroke-width="0.45"/>
<circle cx="717.3" cy="341.0" r="1.55" fill="#1f77b4" stroke="#1b5f88" stroke-width="0.45"/>
<circle cx="718.5" cy="329.6" r="1.55" fill="#1f77b4" stroke="#1b5f88" stroke-width="0.45"/>
<circle cx="707.0" cy="334.9" r="1.55" fill="#1f77b4" stroke="#1b5f88" stroke-width="0.45"/>
<circle cx="694.7" cy="342.3" r="1.55" fill="#1f77b4" stroke="#1b5f88" stroke-width="0.45"/>
<circle cx="733.7" cy="339.4" r="1.55" fill="#1f77b4" stroke="#1b5f88" stroke-width="0.45"/>
<circle cx="739.9" cy="350.8" r="1.55" fill="#1f77b4" stroke="#1b5f88" stroke-width="0.45"/>
<circle cx="696.4" cy="341.2" r="1.55" fill="#1f77b4" stroke="#1b5f88" stroke-width="0.45"/>
<circle cx="719.9" cy="346.2" r="1.55" fill="#1f77b4" stroke="#1b5f88" stroke-width="0.45"/>
<circle cx="726.2" cy="342.9" r="1.55" fill="#1f77b4" stroke="#1b5f88" stroke-width="0.45"/>
<circle cx="727.2" cy="340.7" r="1.55" fill="#1f77b4" stroke="#1b5f88" stroke-width="0.45"/>
<circle cx="708.8" cy="359.6" r="1.55" fill="#1f77b4" stroke="#1b5f88" stroke-width="0.45"/>
<circle cx="730.1" cy="349.9" r="1.55" fill="#1f77b4" stroke="#1b5f88" stroke-width="0.45"/>
<circle cx="696.9" cy="344.5" r="1.55" fill="#1f77b4" stroke="#1b5f88" stroke-width="0.45"/>
<circle cx="737.9" cy="334.4" r="1.55" fill="#1f77b4" stroke="#1b5f88" stroke-width="0.45"/>
<circle cx="742.7" cy="342.5" r="1.55" fill="#1f77b4" stroke="#1b5f88" stroke-width="0.45"/>
<circle cx="730.8" cy="344.8" r="1.55" fill="#1f77b4" stroke="#1b5f88" stroke-width="0.45"/>
<circle cx="727.7" cy="356.8" r="1.55" fill="#1f77b4" stroke="#1b5f88" stroke-width="0.45"/>
<circle cx="717.1" cy="360.1" r="1.55" fill="#1f77b4" stroke="#1b5f88" stroke-width="0.45"/>
<circle cx="710.7" cy="337.6" r="1.55" fill="#1f77b4" stroke="#1b5f88" stroke-width="0.45"/>
<circle cx="736.1" cy="336.4" r="1.55" fill="#1f77b4" stroke="#1b5f88" stroke-width="0.45"/>
<circle cx="717.7" cy="354.2" r="1.55" fill="#1f77b4" stroke="#1b5f88" stroke-width="0.45"/>
<circle cx="732.6" cy="363.0" r="1.55" fill="#1f77b4" stroke="#1b5f88" stroke-width="0.45"/>
<circle cx="744.3" cy="343.8" r="1.55" fill="#1f77b4" stroke="#1b5f88" stroke-width="0.45"/>
<circle cx="713.8" cy="343.3" r="1.55" fill="#1f77b4" stroke="#1b5f88" stroke-width="0.45"/>
<circle cx="704.4" cy="343.6" r="1.55" fill="#1f77b4" stroke="#1b5f88" stroke-width="0.45"/>
<circle cx="720.8" cy="344.7" r="1.55" fill="#1f77b4" stroke="#1b5f88" stroke-width="0.45"/>
<circle cx="744.1" cy="343.9" r="1.55" fill="#1f77b4" stroke="#1b5f88" stroke-width="0.45"/>
<circle cx="699.2" cy="355.5" r="1.55" fill="#1f77b4" stroke="#1b5f88" stroke-width="0.45"/>
<circle cx="705.8" cy="342.0" r="1.55" fill="#1f77b4" stroke="#1b5f88" stroke-width="0.45"/>
<circle cx="721.7" cy="342.9" r="1.55" fill="#1f77b4" stroke="#1b5f88" stroke-width="0.45"/>
<circle cx="706.9" cy="343.8" r="1.55" fill="#1f77b4" stroke="#1b5f88" stroke-width="0.45"/>
<circle cx="721.7" cy="356.1" r="1.55" fill="#1f77b4" stroke="#1b5f88" stroke-width="0.45"/>
<circle cx="736.7" cy="352.9" r="1.55" fill="#1f77b4" stroke="#1b5f88" stroke-width="0.45"/>
<circle cx="709.3" cy="347.2" r="1.55" fill="#1f77b4" stroke="#1b5f88" stroke-width="0.45"/>
<circle cx="732.5" cy="357.6" r="1.55" fill="#1f77b4" stroke="#1b5f88" stroke-width="0.45"/>
<circle cx="732.0" cy="343.9" r="1.55" fill="#1f77b4" stroke="#1b5f88" stroke-width="0.45"/>
<circle cx="724.7" cy="344.1" r="1.55" fill="#1f77b4" stroke="#1b5f88" stroke-width="0.45"/>
<circle cx="728.2" cy="352.1" r="1.55" fill="#1f77b4" stroke="#1b5f88" stroke-width="0.45"/>
<circle cx="718.2" cy="338.7" r="1.55" fill="#1f77b4" stroke="#1b5f88" stroke-width="0.45"/>
<circle cx="709.5" cy="355.9" r="1.55" fill="#1f77b4" stroke="#1b5f88" stroke-width="0.45"/>
<circle cx="745.8" cy="354.9" r="1.55" fill="#1f77b4" stroke="#1b5f88" stroke-width="0.45"/>
<circle cx="738.6" cy="353.5" r="1.55" fill="#1f77b4" stroke="#1b5f88" stroke-width="0.45"/>
<circle cx="724.0" cy="352.0" r="1.55" fill="#1f77b4" stroke="#1b5f88" stroke-width="0.45"/>
<circle cx="706.1" cy="344.2" r="1.55" fill="#1f77b4" stroke="#1b5f88" stroke-width="0.45"/>
<circle cx="711.5" cy="352.5" r="1.55" fill="#1f77b4" stroke="#1b5f88" stroke-width="0.45"/>
<circle cx="714.1" cy="345.0" r="1.55" fill="#1f77b4" stroke="#1b5f88" stroke-width="0.45"/>
<circle cx="730.8" cy="358.2" r="1.55" fill="#1f77b4" stroke="#1b5f88" stroke-width="0.45"/>
<circle cx="710.5" cy="337.6" r="1.55" fill="#1f77b4" stroke="#1b5f88" stroke-width="0.45"/>
<circle cx="737.9" cy="336.0" r="1.55" fill="#1f77b4" stroke="#1b5f88" stroke-width="0.45"/>
<circle cx="731.7" cy="340.9" r="1.55" fill="#1f77b4" stroke="#1b5f88" stroke-width="0.45"/>
<circle cx="722.2" cy="329.6" r="1.55" fill="#1f77b4" stroke="#1b5f88" stroke-width="0.45"/>
<circle cx="736.1" cy="341.5" r="1.55" fill="#1f77b4" stroke="#1b5f88" stroke-width="0.45"/>
<circle cx="730.9" cy="342.9" r="1.55" fill="#1f77b4" stroke="#1b5f88" stroke-width="0.45"/>
<circle cx="725.8" cy="360.5" r="1.55" fill="#1f77b4" stroke="#1b5f88" stroke-width="0.45"/>
<circle cx="723.5" cy="350.1" r="1.55" fill="#1f77b4" stroke="#1b5f88" stroke-width="0.45"/>
<circle cx="732.8" cy="337.8" r="1.55" fill="#1f77b4" stroke="#1b5f88" stroke-width="0.45"/>
<circle cx="726.2" cy="341.5" r="1.55" fill="#1f77b4" stroke="#1b5f88" stroke-width="0.45"/>
<circle cx="702.8" cy="353.8" r="1.55" fill="#1f77b4" stroke="#1b5f88" stroke-width="0.45"/>
<circle cx="735.3" cy="346.7" r="1.55" fill="#1f77b4" stroke="#1b5f88" stroke-width="0.45"/>
<circle cx="732.3" cy="345.1" r="1.55" fill="#1f77b4" stroke="#1b5f88" stroke-width="0.45"/>
<circle cx="695.4" cy="345.5" r="1.55" fill="#1f77b4" stroke="#1b5f88" stroke-width="0.45"/>
<circle cx="698.1" cy="345.8" r="1.55" fill="#1f77b4" stroke="#1b5f88" stroke-width="0.45"/>
<circle cx="726.4" cy="349.2" r="1.55" fill="#1f77b4" stroke="#1b5f88" stroke-width="0.45"/>
<circle cx="727.7" cy="347.5" r="1.55" fill="#1f77b4" stroke="#1b5f88" stroke-width="0.45"/>
<circle cx="704.6" cy="342.5" r="1.55" fill="#1f77b4" stroke="#1b5f88" stroke-width="0.45"/>
<circle cx="715.3" cy="343.9" r="1.55" fill="#1f77b4" stroke="#1b5f88" stroke-width="0.45"/>
<circle cx="775.4" cy="324.3" r="1.55" fill="#1f77b4" stroke="#1b5f88" stroke-width="0.45"/>
<circle cx="779.0" cy="320.9" r="1.55" fill="#1f77b4" stroke="#1b5f88" stroke-width="0.45"/>
<circle cx="798.0" cy="311.5" r="1.55" fill="#1f77b4" stroke="#1b5f88" stroke-width="0.45"/>
<circle cx="835.9" cy="292.4" r="1.55" fill="#1f77b4" stroke="#1b5f88" stroke-width="0.45"/>
<circle cx="836.7" cy="291.8" r="1.55" fill="#1f77b4" stroke="#1b5f88" stroke-width="0.45"/>
<circle cx="824.6" cy="298.3" r="1.55" fill="#1f77b4" stroke="#1b5f88" stroke-width="0.45"/>
<circle cx="812.0" cy="309.4" r="1.55" fill="#1f77b4" stroke="#1b5f88" stroke-width="0.45"/>
<circle cx="782.9" cy="318.9" r="1.55" fill="#1f77b4" stroke="#1b5f88" stroke-width="0.45"/>
<circle cx="798.9" cy="309.8" r="1.55" fill="#1f77b4" stroke="#1b5f88" stroke-width="0.45"/>
<circle cx="829.4" cy="291.8" r="1.55" fill="#1f77b4" stroke="#1b5f88" stroke-width="0.45"/>
<circle cx="766.9" cy="328.2" r="1.55" fill="#1f77b4" stroke="#1b5f88" stroke-width="0.45"/>
<circle cx="811.4" cy="311.3" r="1.55" fill="#1f77b4" stroke="#1b5f88" stroke-width="0.45"/>
<circle cx="799.2" cy="311.8" r="1.55" fill="#1f77b4" stroke="#1b5f88" stroke-width="0.45"/>
<circle cx="827.8" cy="296.7" r="1.55" fill="#1f77b4" stroke="#1b5f88" stroke-width="0.45"/>
<circle cx="780.4" cy="320.7" r="1.55" fill="#1f77b4" stroke="#1b5f88" stroke-width="0.45"/>
<circle cx="808.1" cy="312.3" r="1.55" fill="#1f77b4" stroke="#1b5f88" stroke-width="0.45"/>
<circle cx="791.3" cy="316.7" r="1.55" fill="#1f77b4" stroke="#1b5f88" stroke-width="0.45"/>
<circle cx="814.2" cy="306.3" r="1.55" fill="#1f77b4" stroke="#1b5f88" stroke-width="0.45"/>
<circle cx="792.7" cy="313.6" r="1.55" fill="#1f77b4" stroke="#1b5f88" stroke-width="0.45"/>
<circle cx="817.5" cy="306.0" r="1.55" fill="#1f77b4" stroke="#1b5f88" stroke-width="0.45"/>
<circle cx="832.5" cy="291.7" r="1.55" fill="#1f77b4" stroke="#1b5f88" stroke-width="0.45"/>
<circle cx="797.6" cy="313.3" r="1.55" fill="#1f77b4" stroke="#1b5f88" stroke-width="0.45"/>
<circle cx="807.4" cy="307.3" r="1.55" fill="#1f77b4" stroke="#1b5f88" stroke-width="0.45"/>
<circle cx="813.4" cy="304.8" r="1.55" fill="#1f77b4" stroke="#1b5f88" stroke-width="0.45"/>
<circle cx="801.9" cy="310.4" r="1.55" fill="#1f77b4" stroke="#1b5f88" stroke-width="0.45"/>
<circle cx="840.2" cy="287.3" r="1.55" fill="#1f77b4" stroke="#1b5f88" stroke-width="0.45"/>
<circle cx="830.9" cy="293.9" r="1.55" fill="#1f77b4" stroke="#1b5f88" stroke-width="0.45"/>
<circle cx="826.0" cy="294.6" r="1.55" fill="#1f77b4" stroke="#1b5f88" stroke-width="0.45"/>
<circle cx="843.1" cy="288.2" r="1.55" fill="#1f77b4" stroke="#1b5f88" stroke-width="0.45"/>
<circle cx="837.1" cy="291.2" r="1.55" fill="#1f77b4" stroke="#1b5f88" stroke-width="0.45"/>
<circle cx="818.3" cy="302.1" r="1.55" fill="#1f77b4" stroke="#1b5f88" stroke-width="0.45"/>
<circle cx="845.5" cy="290.1" r="1.55" fill="#1f77b4" stroke="#1b5f88" stroke-width="0.45"/>
<circle cx="830.5" cy="296.3" r="1.55" fill="#1f77b4" stroke="#1b5f88" stroke-width="0.45"/>
<circle cx="825.0" cy="295.8" r="1.55" fill="#1f77b4" stroke="#1b5f88" stroke-width="0.45"/>
<circle cx="827.7" cy="301.1" r="1.55" fill="#1f77b4" stroke="#1b5f88" stroke-width="0.45"/>
<circle cx="779.2" cy="324.3" r="1.55" fill="#1f77b4" stroke="#1b5f88" stroke-width="0.45"/>
<circle cx="834.3" cy="295.4" r="1.55" fill="#1f77b4" stroke="#1b5f88" stroke-width="0.45"/>
<circle cx="832.1" cy="295.6" r="1.55" fill="#1f77b4" stroke="#1b5f88" stroke-width="0.45"/>
<circle cx="807.7" cy="306.1" r="1.55" fill="#1f77b4" stroke="#1b5f88" stroke-width="0.45"/>
<circle cx="841.0" cy="286.8" r="1.55" fill="#1f77b4" stroke="#1b5f88" stroke-width="0.45"/>
<circle cx="800.3" cy="308.6" r="1.55" fill="#1f77b4" stroke="#1b5f88" stroke-width="0.45"/>
<circle cx="778.1" cy="323.4" r="1.55" fill="#1f77b4" stroke="#1b5f88" stroke-width="0.45"/>
<circle cx="842.8" cy="290.7" r="1.55" fill="#1f77b4" stroke="#1b5f88" stroke-width="0.45"/>
<circle cx="770.0" cy="324.5" r="1.55" fill="#1f77b4" stroke="#1b5f88" stroke-width="0.45"/>
<circle cx="837.7" cy="291.3" r="1.55" fill="#1f77b4" stroke="#1b5f88" stroke-width="0.45"/>
<circle cx="798.4" cy="306.1" r="1.55" fill="#1f77b4" stroke="#1b5f88" stroke-width="0.45"/>
<circle cx="829.8" cy="291.4" r="1.55" fill="#1f77b4" stroke="#1b5f88" stroke-width="0.45"/>
<circle cx="802.9" cy="308.8" r="1.55" fill="#1f77b4" stroke="#1b5f88" stroke-width="0.45"/>
<circle cx="801.5" cy="312.9" r="1.55" fill="#1f77b4" stroke="#1b5f88" stroke-width="0.45"/>
<circle cx="826.2" cy="293.8" r="1.55" fill="#1f77b4" stroke="#1b5f88" stroke-width="0.45"/>
<circle cx="829.7" cy="295.3" r="1.55" fill="#1f77b4" stroke="#1b5f88" stroke-width="0.45"/>
<circle cx="816.5" cy="294.5" r="1.55" fill="#1f77b4" stroke="#1b5f88" stroke-width="0.45"/>
<circle cx="832.6" cy="297.1" r="1.55" fill="#1f77b4" stroke="#1b5f88" stroke-width="0.45"/>
<circle cx="776.6" cy="325.1" r="1.55" fill="#1f77b4" stroke="#1b5f88" stroke-width="0.45"/>
<circle cx="803.8" cy="307.4" r="1.55" fill="#1f77b4" stroke="#1b5f88" stroke-width="0.45"/>
<circle cx="809.2" cy="305.1" r="1.55" fill="#1f77b4" stroke="#1b5f88" stroke-width="0.45"/>
<circle cx="781.4" cy="319.8" r="1.55" fill="#1f77b4" stroke="#1b5f88" stroke-width="0.45"/>
<circle cx="814.1" cy="309.1" r="1.55" fill="#1f77b4" stroke="#1b5f88" stroke-width="0.45"/>
<circle cx="767.8" cy="324.0" r="1.55" fill="#1f77b4" stroke="#1b5f88" stroke-width="0.45"/>
<circle cx="788.0" cy="316.3" r="1.55" fill="#1f77b4" stroke="#1b5f88" stroke-width="0.45"/>
<circle cx="770.1" cy="325.1" r="1.55" fill="#1f77b4" stroke="#1b5f88" stroke-width="0.45"/>
<circle cx="794.9" cy="309.9" r="1.55" fill="#1f77b4" stroke="#1b5f88" stroke-width="0.45"/>
<circle cx="829.3" cy="298.6" r="1.55" fill="#1f77b4" stroke="#1b5f88" stroke-width="0.45"/>
<circle cx="764.2" cy="332.5" r="1.55" fill="#1f77b4" stroke="#1b5f88" stroke-width="0.45"/>
<circle cx="782.5" cy="322.9" r="1.55" fill="#1f77b4" stroke="#1b5f88" stroke-width="0.45"/>
<circle cx="823.0" cy="298.2" r="1.55" fill="#1f77b4" stroke="#1b5f88" stroke-width="0.45"/>
<circle cx="797.7" cy="313.9" r="1.55" fill="#1f77b4" stroke="#1b5f88" stroke-width="0.45"/>
<circle cx="814.9" cy="304.3" r="1.55" fill="#1f77b4" stroke="#1b5f88" stroke-width="0.45"/>
<circle cx="785.2" cy="320.1" r="1.55" fill="#1f77b4" stroke="#1b5f88" stroke-width="0.45"/>
<circle cx="764.9" cy="325.2" r="1.55" fill="#1f77b4" stroke="#1b5f88" stroke-width="0.45"/>
<circle cx="849.8" cy="286.2" r="1.55" fill="#1f77b4" stroke="#1b5f88" stroke-width="0.45"/>
<circle cx="820.6" cy="298.7" r="1.55" fill="#1f77b4" stroke="#1b5f88" stroke-width="0.45"/>
<circle cx="802.9" cy="309.3" r="1.55" fill="#1f77b4" stroke="#1b5f88" stroke-width="0.45"/>
<circle cx="809.7" cy="307.6" r="1.55" fill="#1f77b4" stroke="#1b5f88" stroke-width="0.45"/>
<circle cx="779.8" cy="322.1" r="1.55" fill="#1f77b4" stroke="#1b5f88" stroke-width="0.45"/>
<circle cx="847.3" cy="289.3" r="1.55" fill="#1f77b4" stroke="#1b5f88" stroke-width="0.45"/>
<circle cx="792.7" cy="316.9" r="1.55" fill="#1f77b4" stroke="#1b5f88" stroke-width="0.45"/>
<circle cx="793.2" cy="312.9" r="1.55" fill="#1f77b4" stroke="#1b5f88" stroke-width="0.45"/>
<circle cx="805.7" cy="304.6" r="1.55" fill="#1f77b4" stroke="#1b5f88" stroke-width="0.45"/>
<circle cx="849.9" cy="287.9" r="1.55" fill="#1f77b4" stroke="#1b5f88" stroke-width="0.45"/>
<circle cx="825.4" cy="293.4" r="1.55" fill="#1f77b4" stroke="#1b5f88" stroke-width="0.45"/>
<circle cx="842.4" cy="289.1" r="1.55" fill="#1f77b4" stroke="#1b5f88" stroke-width="0.45"/>
<circle cx="825.2" cy="301.2" r="1.55" fill="#1f77b4" stroke="#1b5f88" stroke-width="0.45"/>
<circle cx="835.6" cy="292.5" r="1.55" fill="#1f77b4" stroke="#1b5f88" stroke-width="0.45"/>
<circle cx="839.0" cy="287.5" r="1.55" fill="#1f77b4" stroke="#1b5f88" stroke-width="0.45"/>
<circle cx="805.9" cy="306.0" r="1.55" fill="#1f77b4" stroke="#1b5f88" stroke-width="0.45"/>
<circle cx="805.8" cy="304.6" r="1.55" fill="#1f77b4" stroke="#1b5f88" stroke-width="0.45"/>
<circle cx="783.3" cy="318.3" r="1.55" fill="#1f77b4" stroke="#1b5f88" stroke-width="0.45"/>
<circle cx="843.4" cy="287.5" r="1.55" fill="#1f77b4" stroke="#1b5f88" stroke-width="0.45"/>
<circle cx="793.5" cy="319.4" r="1.55" fill="#1f77b4" stroke="#1b5f88" stroke-width="0.45"/>
<circle cx="769.3" cy="324.3" r="1.55" fill="#1f77b4" stroke="#1b5f88" stroke-width="0.45"/>
<circle cx="818.9" cy="297.5" r="1.55" fill="#1f77b4" stroke="#1b5f88" stroke-width="0.45"/>
<circle cx="782.8" cy="317.5" r="1.55" fill="#1f77b4" stroke="#1b5f88" stroke-width="0.45"/>
<circle cx="802.5" cy="309.3" r="1.55" fill="#1f77b4" stroke="#1b5f88" stroke-width="0.45"/>
<circle cx="800.3" cy="310.9" r="1.55" fill="#1f77b4" stroke="#1b5f88" stroke-width="0.45"/>
<circle cx="785.6" cy="313.7" r="1.55" fill="#1f77b4" stroke="#1b5f88" stroke-width="0.45"/>
<circle cx="798.8" cy="308.3" r="1.55" fill="#1f77b4" stroke="#1b5f88" stroke-width="0.45"/>
<circle cx="814.7" cy="302.9" r="1.55" fill="#1f77b4" stroke="#1b5f88" stroke-width="0.45"/>
<circle cx="808.1" cy="306.7" r="1.55" fill="#1f77b4" stroke="#1b5f88" stroke-width="0.45"/>
<circle cx="834.9" cy="291.0" r="1.55" fill="#1f77b4" stroke="#1b5f88" stroke-width="0.45"/>
<circle cx="839.7" cy="288.9" r="1.55" fill="#1f77b4" stroke="#1b5f88" stroke-width="0.45"/>
<circle cx="813.2" cy="303.8" r="1.55" fill="#1f77b4" stroke="#1b5f88" stroke-width="0.45"/>
<circle cx="827.4" cy="292.8" r="1.55" fill="#1f77b4" stroke="#1b5f88" stroke-width="0.45"/>
<circle cx="790.2" cy="318.0" r="1.55" fill="#1f77b4" stroke="#1b5f88" stroke-width="0.45"/>
<circle cx="805.1" cy="308.3" r="1.55" fill="#1f77b4" stroke="#1b5f88" stroke-width="0.45"/>
<circle cx="803.2" cy="309.2" r="1.55" fill="#1f77b4" stroke="#1b5f88" stroke-width="0.45"/>
<circle cx="837.5" cy="291.2" r="1.55" fill="#1f77b4" stroke="#1b5f88" stroke-width="0.45"/>
<circle cx="778.6" cy="321.2" r="1.55" fill="#1f77b4" stroke="#1b5f88" stroke-width="0.45"/>
<circle cx="838.6" cy="289.6" r="1.55" fill="#1f77b4" stroke="#1b5f88" stroke-width="0.45"/>
<circle cx="785.6" cy="323.7" r="1.55" fill="#1f77b4" stroke="#1b5f88" stroke-width="0.45"/>
<circle cx="809.9" cy="307.0" r="1.55" fill="#1f77b4" stroke="#1b5f88" stroke-width="0.45"/>
<circle cx="792.8" cy="314.8" r="1.55" fill="#1f77b4" stroke="#1b5f88" stroke-width="0.45"/>
<circle cx="809.2" cy="305.1" r="1.55" fill="#1f77b4" stroke="#1b5f88" stroke-width="0.45"/>
<circle cx="783.0" cy="319.7" r="1.55" fill="#1f77b4" stroke="#1b5f88" stroke-width="0.45"/>
<circle cx="781.4" cy="317.5" r="1.55" fill="#1f77b4" stroke="#1b5f88" stroke-width="0.45"/>
<circle cx="806.2" cy="310.4" r="1.55" fill="#1f77b4" stroke="#1b5f88" stroke-width="0.45"/>
<circle cx="783.3" cy="318.5" r="1.55" fill="#1f77b4" stroke="#1b5f88" stroke-width="0.45"/>
<circle cx="827.4" cy="296.8" r="1.55" fill="#1f77b4" stroke="#1b5f88" stroke-width="0.45"/>
<circle cx="772.8" cy="324.0" r="1.55" fill="#1f77b4" stroke="#1b5f88" stroke-width="0.45"/>
<circle cx="792.9" cy="317.6" r="1.55" fill="#1f77b4" stroke="#1b5f88" stroke-width="0.45"/>
<circle cx="655.7" cy="341.0" r="1.55" fill="#1f77b4" stroke="#1b5f88" stroke-width="0.45"/>
<circle cx="666.2" cy="335.3" r="1.55" fill="#1f77b4" stroke="#1b5f88" stroke-width="0.45"/>
<circle cx="668.5" cy="339.8" r="1.55" fill="#1f77b4" stroke="#1b5f88" stroke-width="0.45"/>
<circle cx="673.5" cy="339.1" r="1.55" fill="#1f77b4" stroke="#1b5f88" stroke-width="0.45"/>
<circle cx="680.6" cy="336.8" r="1.55" fill="#1f77b4" stroke="#1b5f88" stroke-width="0.45"/>
<circle cx="685.6" cy="350.0" r="1.55" fill="#1f77b4" stroke="#1b5f88" stroke-width="0.45"/>
<circle cx="691.4" cy="358.0" r="1.55" fill="#1f77b4" stroke="#1b5f88" stroke-width="0.45"/>
<circle cx="699.3" cy="358.8" r="1.55" fill="#1f77b4" stroke="#1b5f88" stroke-width="0.45"/>
<circle cx="694.0" cy="335.6" r="1.55" fill="#1f77b4" stroke="#1b5f88" stroke-width="0.45"/>
<circle cx="694.0" cy="340.0" r="1.55" fill="#1f77b4" stroke="#1b5f88" stroke-width="0.45"/>
<circle cx="713.4" cy="366.0" r="1.55" fill="#1f77b4" stroke="#1b5f88" stroke-width="0.45"/>
<circle cx="721.2" cy="366.3" r="1.55" fill="#1f77b4" stroke="#1b5f88" stroke-width="0.45"/>
<circle cx="716.2" cy="361.7" r="1.55" fill="#1f77b4" stroke="#1b5f88" stroke-width="0.45"/>
<circle cx="724.9" cy="361.0" r="1.55" fill="#1f77b4" stroke="#1b5f88" stroke-width="0.45"/>
<circle cx="734.5" cy="361.7" r="1.55" fill="#1f77b4" stroke="#1b5f88" stroke-width="0.45"/>
<circle cx="739.5" cy="363.8" r="1.55" fill="#1f77b4" stroke="#1b5f88" stroke-width="0.45"/>
<circle cx="741.1" cy="362.7" r="1.55" fill="#1f77b4" stroke="#1b5f88" stroke-width="0.45"/>
<circle cx="696.7" cy="370.4" r="1.55" fill="#1f77b4" stroke="#1b5f88" stroke-width="0.45"/>
<circle cx="700.8" cy="376.2" r="1.55" fill="#1f77b4" stroke="#1b5f88" stroke-width="0.45"/>
<circle cx="706.3" cy="378.2" r="1.55" fill="#1f77b4" stroke="#1b5f88" stroke-width="0.45"/>
<circle cx="740.8" cy="373.0" r="1.55" fill="#1f77b4" stroke="#1b5f88" stroke-width="0.45"/>
<circle cx="747.0" cy="370.4" r="1.55" fill="#1f77b4" stroke="#1b5f88" stroke-width="0.45"/>
<circle cx="753.5" cy="355.2" r="1.55" fill="#1f77b4" stroke="#1b5f88" stroke-width="0.45"/>
<circle cx="759.3" cy="343.1" r="1.55" fill="#1f77b4" stroke="#1b5f88" stroke-width="0.45"/>
<circle cx="748.2" cy="318.6" r="1.55" fill="#1f77b4" stroke="#1b5f88" stroke-width="0.45"/>
<circle cx="756.4" cy="317.0" r="1.55" fill="#1f77b4" stroke="#1b5f88" stroke-width="0.45"/>
<circle cx="746.0" cy="324.5" r="1.55" fill="#1f77b4" stroke="#1b5f88" stroke-width="0.45"/>
<circle cx="757.2" cy="325.7" r="1.55" fill="#1f77b4" stroke="#1b5f88" stroke-width="0.45"/>
<circle cx="757.7" cy="329.8" r="1.55" fill="#1f77b4" stroke="#1b5f88" stroke-width="0.45"/>
<circle cx="759.3" cy="334.5" r="1.55" fill="#1f77b4" stroke="#1b5f88" stroke-width="0.45"/>
<circle cx="766.8" cy="334.0" r="1.55" fill="#1f77b4" stroke="#1b5f88" stroke-width="0.45"/>
<circle cx="762.7" cy="326.5" r="1.55" fill="#1f77b4" stroke="#1b5f88" stroke-width="0.45"/>
<circle cx="765.0" cy="328.2" r="1.55" fill="#1f77b4" stroke="#1b5f88" stroke-width="0.45"/>
<circle cx="772.6" cy="321.5" r="1.55" fill="#1f77b4" stroke="#1b5f88" stroke-width="0.45"/>
<circle cx="780.9" cy="310.3" r="1.55" fill="#1f77b4" stroke="#1b5f88" stroke-width="0.45"/>
<circle cx="779.2" cy="314.6" r="1.55" fill="#1f77b4" stroke="#1b5f88" stroke-width="0.45"/>
<circle cx="776.7" cy="330.7" r="1.55" fill="#1f77b4" stroke="#1b5f88" stroke-width="0.45"/>
<circle cx="851.0" cy="265.8" r="1.55" fill="#1f77b4" stroke="#1b5f88" stroke-width="0.45"/>
<circle cx="865.0" cy="274.6" r="1.55" fill="#1f77b4" stroke="#1b5f88" stroke-width="0.45"/>
<circle cx="871.7" cy="274.6" r="1.55" fill="#1f77b4" stroke="#1b5f88" stroke-width="0.45"/>
<circle cx="872.0" cy="276.5" r="1.55" fill="#1f77b4" stroke="#1b5f88" stroke-width="0.45"/>
<circle cx="872.6" cy="278.2" r="1.55" fill="#1f77b4" stroke="#1b5f88" stroke-width="0.45"/>
<circle cx="878.0" cy="272.9" r="1.55" fill="#1f77b4" stroke="#1b5f88" stroke-width="0.45"/>
<circle cx="882.0" cy="272.9" r="1.55" fill="#1f77b4" stroke="#1b5f88" stroke-width="0.45"/>
<circle cx="887.1" cy="264.6" r="1.55" fill="#1f77b4" stroke="#1b5f88" stroke-width="0.45"/>
<circle cx="889.1" cy="265.8" r="1.55" fill="#1f77b4" stroke="#1b5f88" stroke-width="0.45"/>
<circle cx="896.1" cy="263.0" r="1.55" fill="#1f77b4" stroke="#1b5f88" stroke-width="0.45"/>
<circle cx="894.4" cy="275.7" r="1.55" fill="#1f77b4" stroke="#1b5f88" stroke-width="0.45"/>
<circle cx="903.5" cy="269.9" r="1.55" fill="#1f77b4" stroke="#1b5f88" stroke-width="0.45"/>
<circle cx="853.7" cy="284.3" r="1.55" fill="#1f77b4" stroke="#1b5f88" stroke-width="0.45"/>
<circle cx="857.0" cy="289.3" r="1.55" fill="#1f77b4" stroke="#1b5f88" stroke-width="0.45"/>
<circle cx="850.2" cy="293.1" r="1.55" fill="#1f77b4" stroke="#1b5f88" stroke-width="0.45"/>
<circle cx="844.4" cy="304.2" r="1.55" fill="#1f77b4" stroke="#1b5f88" stroke-width="0.45"/>
<circle cx="839.0" cy="309.2" r="1.55" fill="#1f77b4" stroke="#1b5f88" stroke-width="0.45"/>
<circle cx="831.5" cy="308.9" r="1.55" fill="#1f77b4" stroke="#1b5f88" stroke-width="0.45"/>
<circle cx="827.5" cy="306.4" r="1.55" fill="#1f77b4" stroke="#1b5f88" stroke-width="0.45"/>
<circle cx="807.0" cy="293.4" r="1.55" fill="#1f77b4" stroke="#1b5f88" stroke-width="0.45"/>
<circle cx="933.5" cy="253.3" r="1.55" fill="#1f77b4" stroke="#1b5f88" stroke-width="0.45"/>
<circle cx="941.2" cy="244.2" r="1.55" fill="#1f77b4" stroke="#1b5f88" stroke-width="0.45"/>
<circle cx="626.7" cy="195.7" r="1.7" fill="#1f77b4"/>
</svg>
<div class="t" style="left:637.3px;top:192.57px;font-size:6.77px;color:#555;font-weight:400;font-family:'Liberation Sans', sans-serif;letter-spacing:0px;">trained</div>
<div class="t" style="left:777px;top:387.58px;font-size:7.35px;color:#4a4a4a;font-weight:400;font-family:'Liberation Sans', sans-serif;letter-spacing:0px;">gyrZ Spectral Power 14.06 - 17.19 Hz</div>
<div class="t" style="left:621px;top:291.5px;font-size:7.35px;color:#4a4a4a;transform:translate(-50%,-50%) rotate(-90deg);transform-origin:50% 50%">gyrZ Spectral Power 32.81 - 35.94 Hz</div>
<div style="position:absolute;left:0px;top:0px;width:107px;height:543px;background:#fff"></div>
<div style="position:absolute;left:107px;top:0px;width:9px;height:543px;background:#f1f1f1"></div>
<div style="position:absolute;left:108px;top:0px;width:7px;height:438px;background:#c1c1c1"></div>
<svg style="left:109px;top:530px" width="6" height="4"><path d="M0 0 H6 L3 3.5 Z" fill="#505050"/></svg>
<svg style="left:2px;top:7px" width="15" height="11" viewBox="0 0 15 11">
<path d="M1 1.7 H12" stroke="#30b8d8" stroke-width="2" stroke-linecap="round"/>
<path d="M1 5.4 H9" stroke="#8cc63f" stroke-width="2" stroke-linecap="round"/>
<path d="M10.5 5.4 H13.5" stroke="#f9b233" stroke-width="2" stroke-linecap="round"/>
<path d="M1 9.2 H14" stroke="#f05a28" stroke-width="2" stroke-linecap="round"/>
</svg>
<div class="t" style="left:18.8px;top:8.07px;font-size:9.13px;color:#111;font-weight:700;font-family:'Liberation Sans', sans-serif;letter-spacing:0px;">EDGE IMPULSE</div>
<div class="t" style="left:25.8px;top:62.09px;font-size:9.7px;color:#9a9aa2;font-weight:400;font-family:'Liberation Sans', sans-serif;letter-spacing:0px;">Dashboard</div>
<div class="t" style="left:25.8px;top:91.29px;font-size:9.7px;color:#9a9aa2;font-weight:400;font-family:'Liberation Sans', sans-serif;letter-spacing:0px;">Devices</div>
<div class="t" style="left:25.8px;top:120.29px;font-size:9.7px;color:#9a9aa2;font-weight:400;font-family:'Liberation Sans', sans-serif;letter-spacing:0px;">Data sources</div>
<div class="t" style="left:25.8px;top:148.59px;font-size:9.7px;color:#9a9aa2;font-weight:400;font-family:'Liberation Sans', sans-serif;letter-spacing:0px;">Data</div>
<div class="t" style="left:25.8px;top:162.29px;font-size:9.7px;color:#9a9aa2;font-weight:400;font-family:'Liberation Sans', sans-serif;letter-spacing:0px;">acquisition</div>
<div class="t" style="left:25.8px;top:190.09px;font-size:9.7px;color:#9a9aa2;font-weight:400;font-family:'Liberation Sans', sans-serif;letter-spacing:0px;">Impulse</div>
<div class="t" style="left:25.8px;top:203.79px;font-size:9.7px;color:#9a9aa2;font-weight:400;font-family:'Liberation Sans', sans-serif;letter-spacing:0px;">design</div>
<div class="t" style="left:25.8px;top:349.19px;font-size:9.7px;color:#9a9aa2;font-weight:400;font-family:'Liberation Sans', sans-serif;letter-spacing:0px;">EON Tuner</div>
<div class="t" style="left:25.8px;top:378.19px;font-size:9.7px;color:#9a9aa2;font-weight:400;font-family:'Liberation Sans', sans-serif;letter-spacing:0px;">Retrain model</div>
<div class="t" style="left:25.8px;top:406.99px;font-size:9.7px;color:#9a9aa2;font-weight:400;font-family:'Liberation Sans', sans-serif;letter-spacing:0px;">Live</div>
<div class="t" style="left:25.8px;top:420.99px;font-size:9.7px;color:#9a9aa2;font-weight:400;font-family:'Liberation Sans', sans-serif;letter-spacing:0px;">classification</div>
<div class="t" style="left:25.8px;top:449.29px;font-size:9.7px;color:#9a9aa2;font-weight:400;font-family:'Liberation Sans', sans-serif;letter-spacing:0px;">Model testing</div>
<div class="t" style="left:25.8px;top:478.19px;font-size:9.7px;color:#9a9aa2;font-weight:400;font-family:'Liberation Sans', sans-serif;letter-spacing:0px;">Versioning</div>
<div class="t" style="left:25.8px;top:507.19px;font-size:9.7px;color:#9a9aa2;font-weight:400;font-family:'Liberation Sans', sans-serif;letter-spacing:0px;">Deployment</div>
<div style="position:absolute;left:0;top:0;width:106px;height:543px;overflow:hidden">
<div style="position:absolute;left:26.7px;top:233.2px;width:7px;height:7px;background:#2dce89;border-radius:50%"></div>
<div class="t" style="left:48.9px;top:232.17px;font-size:8.9px;color:#9a9aa2;font-weight:400;font-family:'Liberation Sans', sans-serif;letter-spacing:0px;">Create impulse</div>
<div style="position:absolute;left:26.7px;top:261.9px;width:7px;height:7px;background:#2dce89;border-radius:50%"></div>
<div class="t" style="left:48.9px;top:260.87px;font-size:8.9px;color:#9a9aa2;font-weight:400;font-family:'Liberation Sans', sans-serif;letter-spacing:0px;">Spectral features</div>
<div style="position:absolute;left:26.7px;top:291.4px;width:7px;height:7px;background:#2dce89;border-radius:50%"></div>
<div class="t" style="left:48.9px;top:290.37px;font-size:8.9px;color:#1b1b2a;font-weight:400;font-family:'Liberation Sans', sans-serif;letter-spacing:0px;">Anomaly detection</div>
<div style="position:absolute;left:26.7px;top:321.2px;width:7px;height:7px;background:#2dce89;border-radius:50%"></div>
<div class="t" style="left:48.9px;top:320.17px;font-size:8.9px;color:#9a9aa2;font-weight:400;font-family:'Liberation Sans', sans-serif;letter-spacing:0px;">Classifier</div>
</div>

<svg style="left:1px;top:62px" width="12" height="11" viewBox="0 0 12 11"><rect x="1.3" y="1.3" width="9.6" height="6.4" fill="none" stroke="#11cdef" stroke-width="1.05"/><path d="M3.6 9.4 H8.6" stroke="#11cdef" stroke-width="1.2"/></svg>
<svg style="left:1.5px;top:89.5px" width="13" height="11" viewBox="0 0 13 11"><rect x="3" y="0.5" width="6.8" height="10" rx="0.9" fill="#5e72e4"/><rect x="0.9" y="2.2" width="1.3" height="0.8" fill="#7d8ff0"/><rect x="10.6" y="2.2" width="1.3" height="0.8" fill="#7d8ff0"/><rect x="0.9" y="4.2" width="1.3" height="0.8" fill="#7d8ff0"/><rect x="10.6" y="4.2" width="1.3" height="0.8" fill="#7d8ff0"/><rect x="0.9" y="6.2" width="1.3" height="0.8" fill="#7d8ff0"/><rect x="10.6" y="6.2" width="1.3" height="0.8" fill="#7d8ff0"/><rect x="0.9" y="8.2" width="1.3" height="0.8" fill="#7d8ff0"/><rect x="10.6" y="8.2" width="1.3" height="0.8" fill="#7d8ff0"/></svg>
<svg style="left:2.5px;top:119.5px" width="11" height="10" viewBox="0 0 11 10"><path d="M1 9 L8.5 1.5" stroke="#f5365c" stroke-width="1.8" stroke-linecap="round"/><path d="M2 1 L2.8 2.5 M9 7 L9.8 8.5 M1 4.5 L2.5 4.5" stroke="#f5365c" stroke-width="1.2"/></svg>
<svg style="left:3px;top:154.5px" width="9" height="10" viewBox="0 0 9 10"><ellipse cx="4.5" cy="1.8" rx="4.2" ry="1.7" fill="#5603ad"/><path d="M0.3 3.2 Q4.5 5.6 8.7 3.2 V5.4 Q4.5 7.8 0.3 5.4Z M0.3 6.6 Q4.5 9 8.7 6.6 V8.2 Q4.5 10.6 0.3 8.2Z" fill="#5603ad"/></svg>
<svg style="left:1px;top:198.5px" width="12" height="9" viewBox="0 0 12 9"><path d="M0.6 5.2 H2.3 L3.6 6.8 L5.6 1.2 L7.3 7.6 L8.7 4.4 L9.6 5.2 H11.4" stroke="#fb6340" stroke-width="1.1" fill="none" stroke-linejoin="round"/></svg>
<svg style="left:1.5px;top:349.5px" width="11" height="11" viewBox="0 0 11 11"><circle cx="5.5" cy="5.5" r="4.6" fill="none" stroke="#2dce89" stroke-width="1.3"/><path d="M7.8 3.2 L6.3 6.3 L3.2 7.8 L4.7 4.7Z" fill="#2dce89"/></svg>
<svg style="left:2.5px;top:378.5px" width="10" height="9" viewBox="0 0 10 9"><path d="M0.5 2 H3 L6.5 7 H8.5 M0.5 7 H3 L6.5 2 H8.5" stroke="#ffd600" stroke-width="1.4" fill="none"/><path d="M8 0 L10 2 L8 4Z M8 5 L10 7 L8 9Z" fill="#ffd600"/></svg>
<svg style="left:1.5px;top:415px" width="11" height="9" viewBox="0 0 11 9"><path d="M1.8 7.2 Q5.5 -2 9.2 7.2" stroke="#2dce89" stroke-width="1.1" fill="none"/><circle cx="1.8" cy="7.2" r="1.4" fill="#2dce89"/><circle cx="9.2" cy="7.2" r="1.4" fill="#2dce89"/><path d="M1 2 H10" stroke="#2dce89" stroke-width="0.8"/></svg>
<svg style="left:3px;top:449.5px" width="8" height="9" viewBox="0 0 8 9"><rect x="0" y="1" width="7.5" height="8" rx="1" fill="#f3a4b5"/><rect x="2.3" y="0" width="3" height="2" fill="#f3a4b5"/><path d="M2 5.2 L3.4 6.5 L5.8 3.8" stroke="#fff" stroke-width="1" fill="none"/></svg>
<svg style="left:3px;top:477.5px" width="8" height="11" viewBox="0 0 8 11"><circle cx="1.5" cy="1.5" r="1.2" fill="none" stroke="#5e72e4" stroke-width="1"/><circle cx="1.5" cy="9.5" r="1.2" fill="none" stroke="#5e72e4" stroke-width="1"/><circle cx="6.5" cy="3" r="1.2" fill="none" stroke="#5e72e4" stroke-width="1"/><path d="M1.5 2.7 V8.3 M6.5 4.2 Q6.5 6.5 1.8 8" stroke="#5e72e4" stroke-width="1" fill="none"/></svg>
<svg style="left:1.5px;top:508.5px" width="10" height="9" viewBox="0 0 10 9"><path d="M5 0 L9.5 2 V7 L5 9 L0.5 7 V2Z" fill="#f5365c"/><path d="M0.5 2 L5 4 L9.5 2 M5 4 V9" stroke="#fff" stroke-width="0.7" fill="none"/></svg>

<div style="position:absolute;left:0px;top:535px;width:207px;height:8px;background:linear-gradient(#cfcfcf,#a9a9a9 2px,#a6a6a6);border-top-right-radius:3px"></div>
<div style="position:absolute;left:0;top:535px;width:207px;height:8px;overflow:hidden">
<div class="t" style="left:0px;top:3.95px;font-size:7.5px;color:rgba(222,230,250,.9);font-weight:400;font-family:'Liberation Sans', sans-serif;letter-spacing:0px;">s://studio.edgeimpulse.com/studio/175044/versions/anomaly?x</div>
</div>
</body></html>
